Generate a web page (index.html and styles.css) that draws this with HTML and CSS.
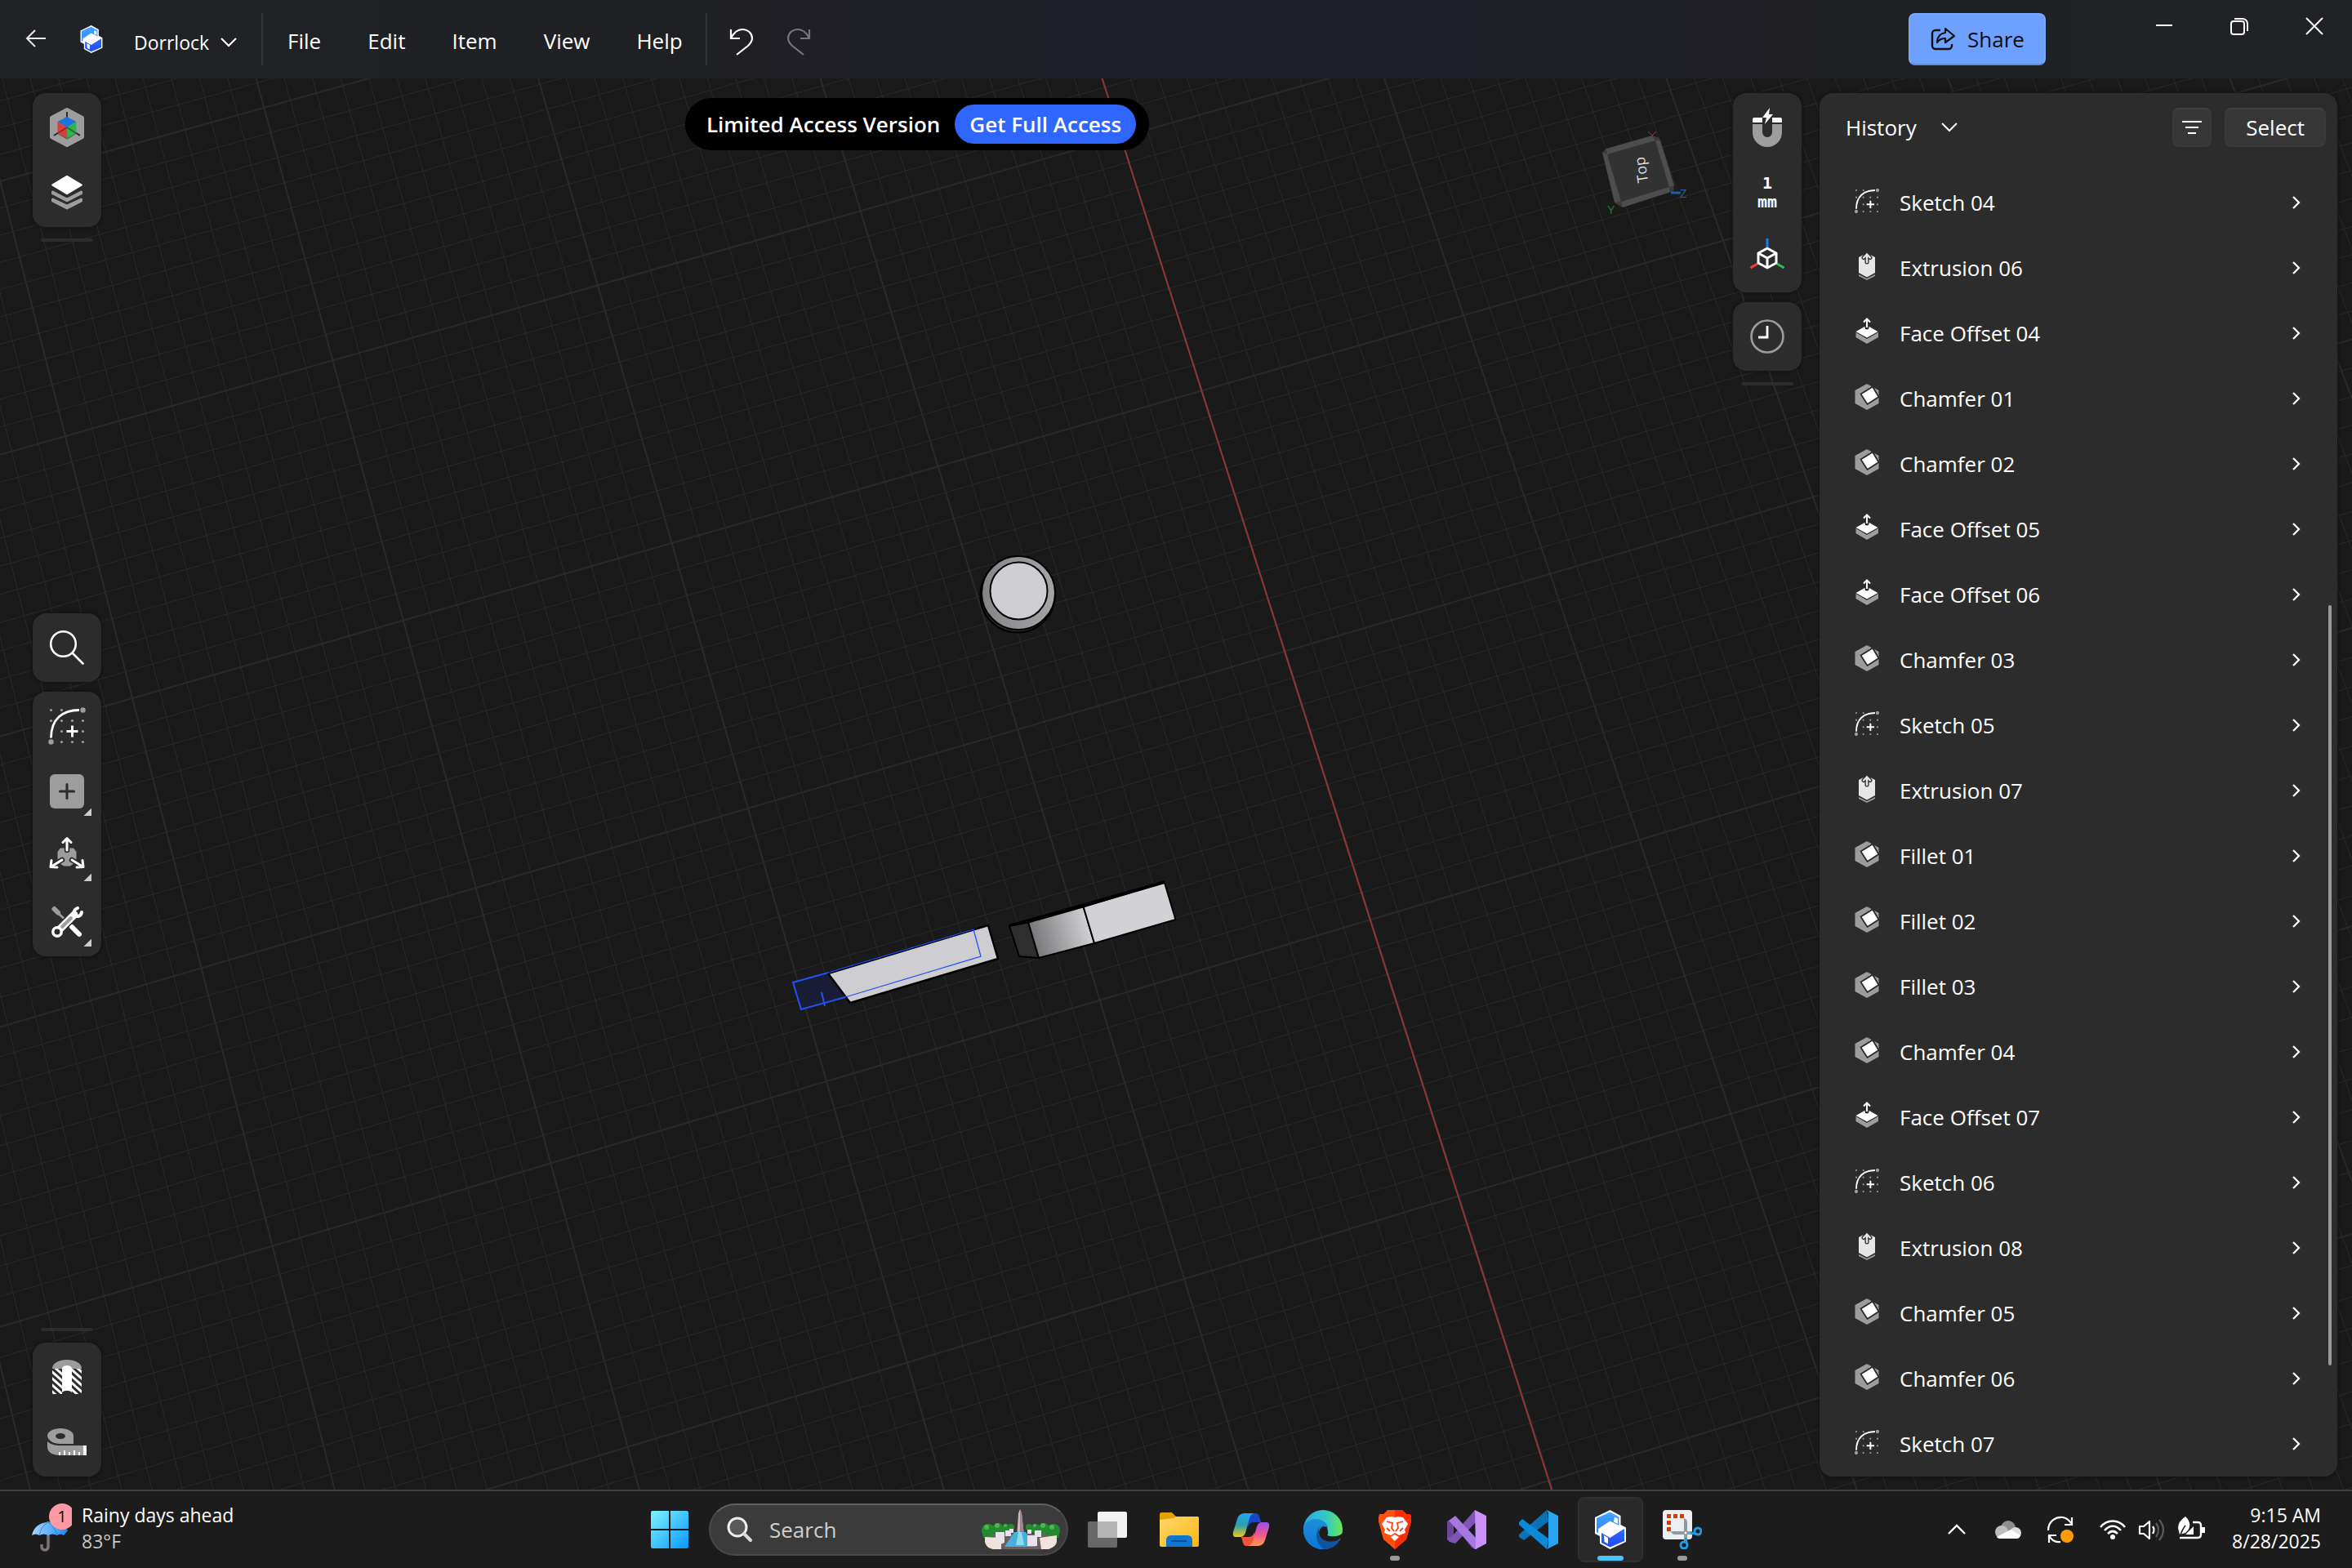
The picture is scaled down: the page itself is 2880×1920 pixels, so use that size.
FILE: index.html
```html
<!DOCTYPE html>
<html lang="en">
<head>
<meta charset="utf-8">
<meta name="viewport" content="width=device-width, initial-scale=1">
<title>Dorrlock</title>
<link rel="stylesheet" href="styles.css">
</head>
<body>
<svg class="defs" aria-hidden="true">
  <defs>
    <linearGradient id="logoTop" x1="0" y1="0" x2="0" y2="1"><stop offset="0" stop-color="#43a5ff"/><stop offset="1" stop-color="#2f86ff"/></linearGradient>
    <linearGradient id="logoLow" x1="0" y1="0" x2="0" y2="1"><stop offset="0" stop-color="#2f6bff"/><stop offset="1" stop-color="#1c49f5"/></linearGradient>
    <pattern id="hatch" width="6" height="6" patternUnits="userSpaceOnUse" patternTransform="rotate(42)"><rect width="6" height="3" fill="#fff"/></pattern>
  </defs>
  <symbol id="logo" viewBox="0 0 38 48">
    <path d="M18.500 0 31.500 7v11L38 21.500V39L18.500 48 6 41V32L0 29V9Z" fill="#fff"/>
    <path d="M18.500 2.500 29.500 8.500V19L18.500 13.500 4 23v5L2 27V10Z" fill="url(#logoTop)"/>
    <path d="M36 23v15L18.500 45.500 8 40V28l10.500 6L34 24Z" fill="url(#logoLow)"/>
    <path d="M18.500 15.500 33 24 18.500 32.500 5 24Z" fill="#fff"/>
    <path d="M24 8.500 28 10.500V17l-5-2.500Z" fill="#fff"/>
    <path d="M11 31l5 3v7.500l-4.500-2.500Z" fill="#fff"/>
  </symbol>
  <symbol id="sketch" viewBox="-24 -24 48 48">
    <g fill="#9d9d9d">
      <circle cx="-19.500" cy="-19.500" r="1.600"/><circle cx="-6.500" cy="-19.500" r="1.600"/>
      <circle cx="-19.500" cy="-6.500" r="1.600"/><circle cx="-6.500" cy="-6.500" r="1.600"/><circle cx="6.500" cy="-6.500" r="1.600"/><circle cx="19.500" cy="-6.500" r="1.600"/>
      <circle cx="-6.500" cy="6.500" r="1.600"/><circle cx="19.500" cy="6.500" r="1.600"/>
      <circle cx="-6.500" cy="19.500" r="1.600"/><circle cx="6.500" cy="19.500" r="1.600"/><circle cx="19.500" cy="19.500" r="1.600"/>
      <circle cx="19.500" cy="-19.500" r="3.200"/><circle cx="-19.500" cy="19.500" r="3.200"/>
    </g>
    <path d="M-19.500 14.500C-19.500-8-6-19.500 15-19.500" fill="none" stroke="#fff" stroke-width="2.800"/>
    <path d="M-.500 6.500h14M6.500-.500v14" fill="none" stroke="#fff" stroke-width="3"/>
  </symbol>
  <symbol id="extrusion" viewBox="-24 -24 48 48">
    <path d="M-10 8 0 13 10 8v2L0 15-10 10Z" fill="#9d9d9d"/>
    <path d="M-10-13-5-15.500h10L10-13V6L0 11.500-10 6Z" fill="#e6e6e6"/>
    <path d="M0-7v-9M-4-12.500 0-16.500 4-12.500" fill="none" stroke="#2c2c2c" stroke-width="5" stroke-linecap="round"/>
    <path d="M0-7v-9.500M-4-12.500 0-16.500 4-12.500" fill="none" stroke="#e6e6e6" stroke-width="2.400" stroke-linecap="round"/>
  </symbol>
  <symbol id="offset" viewBox="-24 -24 48 48">
    <path d="M-13.500-1 0 7 14-1V5L0 13-13.500 5Z" fill="#9d9d9d"/>
    <path d="M0-9.500 13.500-2 0 5.500-13.500-2Z" fill="#fff"/>
    <path d="M0-7v-8" stroke="#2c2c2c" stroke-width="5" stroke-linecap="round"/>
    <path d="M0-7v-10M-4-13.500 0-17.500 4-13.500" fill="none" stroke="#fff" stroke-width="2"/>
  </symbol>
  <symbol id="chamfer" viewBox="-24 -24 48 48">
    <path d="M0-18 14.500-10V6L0 14-14.500 6V-10Z" fill="#9d9d9d"/>
    <path d="M-7.500-5.500 7-14.500 14.500-2 .500 7Z" fill="#fff" stroke="#2c2c2c" stroke-width="1.800" stroke-linejoin="round"/>
  </symbol>
  <symbol id="next" viewBox="0 0 12 20"><path d="M2 3 9 10 2 17" fill="none" stroke="#fff" stroke-width="2.200"/></symbol>
  <symbol id="down" viewBox="0 0 24 16"><path d="M3 3l9 9 9-9" fill="none" stroke="currentColor" stroke-width="2"/></symbol>
  <symbol id="more" viewBox="0 0 10 10"><path d="M10 0v10H0Z" fill="#cfcfcf"/></symbol>
</svg>

<header class="titlebar">
  <button class="icon-btn back" aria-label="Back"><svg width="28" height="28" viewBox="0 0 28 28"><path d="M26 13H3M13 3 3 13 13 23" fill="none" stroke="#e8e8e8" stroke-width="2"/></svg></button>
  <svg class="app-logo" width="28" height="34"><use href="#logo"/></svg>
  <button class="doc-name">Dorrlock <svg width="24" height="16"><use href="#down"/></svg></button>
  <nav class="menus" aria-label="Main menu">
    <button>File</button><button>Edit</button><button>Item</button><button>View</button><button>Help</button>
  </nav>
  <div class="undo-redo">
    <button class="icon-btn" aria-label="Undo"><svg width="32" height="36" viewBox="0 0 32 36"><path d="M3 3v11h11M3 14C7 6 12 3 17 3c7 0 12 5 12 11 0 4-2 6-5 9L10 34" fill="none" stroke="#fff" stroke-width="2.200"/></svg></button>
    <button class="icon-btn" aria-label="Redo" disabled><svg width="32" height="36" viewBox="0 0 32 36"><path d="M29 3v11H18M29 14C25 6 20 3 15 3 8 3 3 8 3 14c0 4 2 6 5 9l14 11" fill="none" stroke="#75767a" stroke-width="2.200"/></svg></button>
  </div>
  <button class="share"><svg width="32" height="32" viewBox="0 0 32 32"><path d="M13 5H7a4 4 0 0 0-4 4v15a4 4 0 0 0 4 4h16a4 4 0 0 0 4-4v-2" fill="none" stroke="#111" stroke-width="2.400"/><path d="M19 3 30 12 19 20v-5c-5 0-8 2-10 5 0-7 4-11 10-12Z" fill="none" stroke="#111" stroke-width="2.200" stroke-linejoin="round"/></svg>Share</button>
  <div class="window-controls">
    <button aria-label="Minimize"><svg width="24" height="24" viewBox="0 0 24 24"><path d="M2 11h20" stroke="#fff" stroke-width="2"/></svg></button>
    <button aria-label="Restore"><svg width="24" height="24" viewBox="0 0 24 24"><rect x="2" y="6" width="16" height="16" rx="3" fill="none" stroke="#fff" stroke-width="2"/><path d="M6 3h10a6 6 0 0 1 6 6v9" fill="none" stroke="#fff" stroke-width="2"/></svg></button>
    <button aria-label="Close"><svg width="24" height="24" viewBox="0 0 24 24"><path d="M2 2l20 20M22 2 2 22" stroke="#fff" stroke-width="2"/></svg></button>
  </div>
</header>

<main class="workspace">
  <svg class="scene" viewBox="0 96 2880 1728" preserveAspectRatio="xMidYMid slice" aria-label="Model viewport">
    <defs><linearGradient id="steel" gradientUnits="userSpaceOnUse" x1="1265" y1="1150" x2="1332" y2="1132"><stop offset="0" stop-color="#78787a"/><stop offset="1" stop-color="#d0d0d3"/></linearGradient>
    <linearGradient id="rim" x1="0" x2="1"><stop offset="0" stop-color="#858587"/><stop offset="1" stop-color="#a5a5a8"/></linearGradient></defs>
    <path id="gridMinor" class="grid-minor"/>
    <path id="gridMajor" class="grid-major"/>
    <path d="M1349.500 96 1900 1824" stroke="#8f3535" stroke-width="2"/>
    <g stroke="#000" stroke-width="2" stroke-linejoin="round">
      <circle cx="1246" cy="729" r="45.500" fill="#2a2a2a"/>
      <circle cx="1247" cy="726" r="45" fill="url(#rim)"/>
      <circle cx="1247.500" cy="723.500" r="35" fill="#ceced2"/>
      <path d="M971 1203 1014 1192 1041 1221 981 1236Z" fill="#181c35" stroke="none"/>
      <path d="M1014 1192 1210 1133 1222 1174 1041 1228Z" fill="#ceced2" stroke-width="2.500"/>
      <path d="M1236 1134 1259 1129 1272 1173 1248 1171Z" fill="#2e2e2f"/>
      <path d="M1259 1129 1326.500 1110 1340 1155 1272 1173Z" fill="url(#steel)"/>
      <path d="M1326.500 1110 1426 1081 1439.500 1126 1340 1155Z" fill="#d2d2d6"/>
      <path d="M1237 1133 1259 1127 1326 1108 1425 1080 1326 1110 1259 1129Z" fill="#000" stroke-width="3"/>
    </g>
    <g fill="none" stroke="#2350f5">
      <path d="M1014 1191 971 1203 981 1236 1035 1221M1006 1215 1010 1232" stroke-width="2"/>
      <path d="M1014 1191 1192 1138 1201 1171 1035 1221" stroke-width="1.300"/>
    </g>
  </svg>

  <div class="rail rail-left">
    <div class="stack">
      <div class="tools">
        <button aria-label="Orientation"><svg width="80" height="80" viewBox="-40 -40 80 80"><path d="M0-22 19-12V12L0 22-19 12V-12Z" fill="#9d9d9d" stroke="#9d9d9d" stroke-width="4" stroke-linejoin="round"/><path d="M0-19v8M-16 10l6-4M16 10l-6-4" stroke="#222" stroke-width="1.800"/><path d="M-11.500 8 0 15 11.500 8 0 2Z" fill="#666"/><path d="M0-13 11.500-7 0 0-11.500-7Z" fill="#1d72e0"/><path d="M-11.500-7 0 0v13L-11.500 7Z" fill="#e03b3b"/><path d="M11.500-7 0 0v13L11.500 7Z" fill="#2fb34a"/><path d="M-11 7 0 0 11 7" fill="none" stroke="#222" stroke-opacity=".500" stroke-width="1.500"/></svg></button>
        <button aria-label="Layers"><svg width="80" height="80" viewBox="-40 -40 80 80"><g fill="#9d9d9d" stroke="#9d9d9d" stroke-width="3" stroke-linejoin="round"><path d="M-17.500 8 0 16 17.500 8v2L0 19-17.500 10Z"/><path d="M-17.500-1 0 8 17.500-1v2L0 10-17.500 1Z"/></g><path d="M-18 3.500 0 13 18 3.500M-18-5.500 0 4.500 18-5.500" fill="none" stroke="#2c2c2c" stroke-width="2"/><path d="M0-20 17.500-9.500 0 1-17.500-9.500Z" fill="#fff" stroke="#fff" stroke-width="2.500" stroke-linejoin="round"/></svg></button>
      </div>
      <div class="handle"></div>
    </div>
    <div class="stack">
      <div class="tools">
        <button aria-label="Search"><svg width="80" height="80" viewBox="-40 -40 80 80" fill="none" stroke="#fff" stroke-width="2.600" stroke-linecap="round"><circle cx="-4.500" cy="-4.500" r="15.300"/><path d="M6.500 6.500 19.500 19.500"/></svg></button>
      </div>
      <div class="tools">
        <button aria-label="Sketch"><svg width="48" height="48"><use href="#sketch"/></svg></button>
        <button aria-label="Add"><svg width="80" height="80" viewBox="-40 -40 80 80"><rect x="-21" y="-21" width="42" height="42" rx="6" fill="#9d9d9d"/><path d="M-8.500 0h17M0-8.500v17" stroke="#2c2c2c" stroke-width="3" stroke-linecap="round"/><use href="#more" x="20.500" y="20.500" width="9.500" height="9.500"/></svg></button>
        <button aria-label="Transform"><svg width="80" height="80" viewBox="-40 -40 80 80"><path d="M-8-10h16l3 4V6L4 11h-8l-7-5V-6Z" fill="#9d9d9d" stroke="#9d9d9d" stroke-width="1" stroke-linejoin="round"/><g fill="none" stroke-linecap="round" stroke-linejoin="round"><path d="M0-8v-12M-6 4-17 10M6 4 17 10" stroke="#2c2c2c" stroke-width="6.500"/><path d="M0-8v-14M-5-17.500 0-22.500 5-17.500M-6 4-19 12M-19 4.500-20 12.500-12 13M6 4 19 12M19 4.500 20 12.500 12 13" stroke="#fff" stroke-width="3"/></g><use href="#more" x="20.500" y="20.500" width="9.500" height="9.500"/></svg></button>
        <button aria-label="Tools"><svg width="80" height="80" viewBox="-40 -40 80 80" stroke-linecap="round"><path d="M-15.500-16 -11-11.500" stroke="#9d9d9d" stroke-width="6"/><path d="M-10-10-4.500-5" stroke="#9d9d9d" stroke-width="3"/><path d="M6 6 15 15" stroke="#fff" stroke-width="6"/><path d="M-9 9 9-9" stroke="#2c2c2c" stroke-width="12"/><path d="M-9 9 9-9" stroke="#fff" stroke-width="9"/><path d="M-6 6 5-5" stroke="#9d9d9d" stroke-width="4"/><circle cx="-12" cy="12" r="5.200" fill="#2c2c2c" stroke="#fff" stroke-width="3.500"/><path d="M13-17C8-15 7-10 10-8S17-7 18-12" fill="none" stroke="#fff" stroke-width="4"/><use href="#more" x="20.500" y="20.500" width="9.500" height="9.500"/></svg></button>
      </div>
    </div>
    <div class="stack">
      <div class="handle"></div>
      <div class="tools">
        <button aria-label="Section view"><svg width="80" height="80" viewBox="-40 -40 80 80"><path d="M-18-10C-18-17-10-21 0-21S18-17 18-10Z" fill="#9d9d9d"/><rect x="-18" y="-10" width="12" height="31" fill="url(#hatch)"/><rect x="6" y="-10" width="12" height="31" fill="url(#hatch)"/><path d="M-6-11C-4-15 4-15 6-11V19C3 16-3 16-6 19Z" fill="#fff"/></svg></button>
        <button aria-label="Measure"><svg width="80" height="80" viewBox="-40 -40 80 80"><path d="M8-8C8-13 1-17-8-17S-24-13-24-8s7 10 16 10H8Z" fill="#9d9d9d"/><ellipse cx="-8" cy="-7.500" rx="6" ry="3.500" fill="#2c2c2c"/><path d="M-24-1C-20 3-14 4-8 4H20V16H-8C-18 16-24 12-24 6Z" fill="#9d9d9d"/><path d="M20 4h4v12h-4ZM-10 12h2v4h-2ZM-4 10h2v6h-2ZM2 12h2v4H2ZM8 10h2v6H8ZM14 12h2v4h-2Z" fill="#fff"/></svg></button>
      </div>
    </div>
  </div>

  <div class="stage">
    <div class="promo">
      <span>Limited Access Version</span>
      <button>Get Full Access</button>
    </div>
    <svg class="view-cube" width="120" height="120" viewBox="1952 152 120 120" aria-label="View cube">
      <path d="M1962 187 1967 182 2023 166 2031 169 2033 172 2050 227 2049 234 1987 254 1977 248Z" fill="#4d4d4d"/>
      <path d="M1962 187 1967 182 1968 189ZM2023 166 2031 169 2033 172 2027 172ZM2050 227 2049 234 2044 235 2044 229ZM1977 248 1987 254 1985 247Z" fill="#3a3a3a"/>
      <path d="M1968 189 2027 172 2044 229 1985 247Z" fill="#323232"/>
      <text x="2009" y="208" transform="rotate(-98 2009 208)" text-anchor="middle" dominant-baseline="central" class="cube-face">Top</text>
      <path d="M2046 236H2058" stroke="#1c5ea8" stroke-width="3"/>
      <text x="2057" y="242" class="cube-axis" fill="#1c5ea8">Z</text>
      <text x="1968" y="262" class="cube-axis" fill="#2c7a35">Y</text>
      <path d="M2018 161 2023 166 2028 161" fill="none" stroke="#a33" stroke-width="1"/>
    </svg>
  </div>

  <div class="rail rail-right">
    <div class="stack">
      <div class="tools">
        <button aria-label="Snapping"><svg width="80" height="80" viewBox="-40 -40 80 80"><path d="M-18-4H-6V6A6 6 0 0 0 6 6V-4H18V6A18 18 0 0 1-18 6Z" fill="#9d9d9d"/><path d="M-18-6v-4q0-2 2-2H-6v6ZM18-6v-4q0-2-2-2H6v6Z" fill="#fff"/><path d="M3-24-6-12H-1L-3-4 7-16H2Z" fill="#fff"/></svg></button>
        <button class="unit"><span>1</span><span>mm</span></button>
        <button aria-label="Axes"><svg width="80" height="80" viewBox="-40 -40 80 80" fill="none" stroke-width="3" stroke-linejoin="round"><path d="M0-24v11" stroke="#1d7bea"/><path d="M-20.500 12-12 7" stroke="#f0433a"/><path d="M20.500 12 12 7" stroke="#30c04a"/><path d="M0-12 11-6V6L0 12-11 6V-6ZM-11-6 0 0 11-6M0 0v12" stroke="#fff"/></svg></button>
      </div>
      <div class="tools">
        <button aria-label="History"><svg width="80" height="80" viewBox="-40 -40 80 80" fill="none"><circle r="19.500" stroke="#9d9d9d" stroke-width="2.600"/><path d="M0-13V1H-11" stroke="#fff" stroke-width="2.800"/></svg></button>
      </div>
      <div class="handle"></div>
    </div>
  </div>

  <aside class="panel">
    <div class="panel-head">
      <button class="panel-title">History <svg width="24" height="16"><use href="#down"/></svg></button>
      <button class="chip chip-icon" aria-label="Filter"><svg width="28" height="28" viewBox="0 0 28 28"><path d="M2 7h24M6 14h16M9 21h10" stroke="#fff" stroke-width="2.200"/></svg></button>
      <button class="chip">Select</button>
    </div>
    <ul class="history">
      <li><button><svg class="sketch"><use href="#sketch"/></svg><span>Sketch 04</span><svg class="go"><use href="#next"/></svg></button></li>
      <li><button><svg><use href="#extrusion"/></svg><span>Extrusion 06</span><svg class="go"><use href="#next"/></svg></button></li>
      <li><button><svg><use href="#offset"/></svg><span>Face Offset 04</span><svg class="go"><use href="#next"/></svg></button></li>
      <li><button><svg><use href="#chamfer"/></svg><span>Chamfer 01</span><svg class="go"><use href="#next"/></svg></button></li>
      <li><button><svg><use href="#chamfer"/></svg><span>Chamfer 02</span><svg class="go"><use href="#next"/></svg></button></li>
      <li><button><svg><use href="#offset"/></svg><span>Face Offset 05</span><svg class="go"><use href="#next"/></svg></button></li>
      <li><button><svg><use href="#offset"/></svg><span>Face Offset 06</span><svg class="go"><use href="#next"/></svg></button></li>
      <li><button><svg><use href="#chamfer"/></svg><span>Chamfer 03</span><svg class="go"><use href="#next"/></svg></button></li>
      <li><button><svg class="sketch"><use href="#sketch"/></svg><span>Sketch 05</span><svg class="go"><use href="#next"/></svg></button></li>
      <li><button><svg><use href="#extrusion"/></svg><span>Extrusion 07</span><svg class="go"><use href="#next"/></svg></button></li>
      <li><button><svg><use href="#chamfer"/></svg><span>Fillet 01</span><svg class="go"><use href="#next"/></svg></button></li>
      <li><button><svg><use href="#chamfer"/></svg><span>Fillet 02</span><svg class="go"><use href="#next"/></svg></button></li>
      <li><button><svg><use href="#chamfer"/></svg><span>Fillet 03</span><svg class="go"><use href="#next"/></svg></button></li>
      <li><button><svg><use href="#chamfer"/></svg><span>Chamfer 04</span><svg class="go"><use href="#next"/></svg></button></li>
      <li><button><svg><use href="#offset"/></svg><span>Face Offset 07</span><svg class="go"><use href="#next"/></svg></button></li>
      <li><button><svg class="sketch"><use href="#sketch"/></svg><span>Sketch 06</span><svg class="go"><use href="#next"/></svg></button></li>
      <li><button><svg><use href="#extrusion"/></svg><span>Extrusion 08</span><svg class="go"><use href="#next"/></svg></button></li>
      <li><button><svg><use href="#chamfer"/></svg><span>Chamfer 05</span><svg class="go"><use href="#next"/></svg></button></li>
      <li><button><svg><use href="#chamfer"/></svg><span>Chamfer 06</span><svg class="go"><use href="#next"/></svg></button></li>
      <li><button><svg class="sketch"><use href="#sketch"/></svg><span>Sketch 07</span><svg class="go"><use href="#next"/></svg></button></li>
    </ul>
    <div class="scroll-thumb"></div>
  </aside>
</main>

<footer class="taskbar">
  <button class="weather">
    <svg width="52" height="64" viewBox="0 0 52 64"><defs><linearGradient id="brolly" x1="0" x2="1"><stop offset="0" stop-color="#a9d3ff"/><stop offset=".500" stop-color="#5fb2f7"/><stop offset="1" stop-color="#1c86ee"/></linearGradient></defs><path d="M23 26v30q0 5-4 5t-4-5v-2" fill="none" stroke="#7b7474" stroke-width="3.500"/><path d="M3 43C5 33 13 27 23 27S44 31 47 37L42 43Q38 40 34 43 28 40 23 43 18 40 12 43 8 40 3 43Z" fill="url(#brolly)"/><path d="M12 43Q14 32 23 27 31 32 34 43" fill="none" stroke="#2f8be0" stroke-width="1"/><circle cx="40" cy="20" r="16" fill="#ff99a4"/><text x="40" y="27" text-anchor="middle" class="badge-text">1</text></svg>
    <span class="weather-text"><span>Rainy days ahead</span><span class="dim">83°F</span></span>
  </button>

  <div class="apps">
    <button class="app" aria-label="Start"><svg width="48" height="48" viewBox="0 0 48 48"><defs><linearGradient id="win" x1="0" y1="0" x2="1" y2="1"><stop offset="0" stop-color="#7df3ff"/><stop offset="1" stop-color="#0a97ff"/></linearGradient></defs><path d="M3 1H23V23H1V3Q1 1 3 1ZM25 1H45Q47 1 47 3V23H25ZM1 25H23V47H3Q1 47 1 45ZM25 25H47V45Q47 47 45 47H25Z" fill="url(#win)"/></svg></button>
    <div class="search">
      <svg width="32" height="32" viewBox="0 0 32 32"><circle cx="13" cy="13" r="11" fill="#5a5a5a" stroke="#eee" stroke-width="3"/><path d="M21 21 29 29" stroke="#d8dce2" stroke-width="4" stroke-linecap="round"/></svg>
      <input type="search" placeholder="Search" aria-label="Search">
      <svg width="96" height="50" viewBox="0 0 96 50">
        <path d="M4 30H92V40Q88 49 78 49H18Q8 49 4 40Z" fill="#6a5f60"/>
        <g fill="#258a2f"><circle cx="8" cy="26" r="8"/><circle cx="88" cy="26" r="8"/><circle cx="20" cy="24" r="7"/><circle cx="76" cy="24" r="7"/><circle cx="30" cy="24" r="6"/><circle cx="66" cy="24" r="6"/><circle cx="36" cy="22" r="4"/><circle cx="58" cy="22" r="4"/><path d="M0 26h14v9H2ZM82 26h14l-2 9H82Z"/></g>
        <g fill="#48b84c"><circle cx="6" cy="22" r="3"/><circle cx="19" cy="20" r="3"/><circle cx="29" cy="20" r="2"/><circle cx="65" cy="20" r="2"/><circle cx="75" cy="20" r="3"/><circle cx="86" cy="22" r="3"/></g>
        <path d="M40 28H54L66 46H28Z" fill="#46b0dd"/><path d="M45 28h4l3 16H42Z" fill="#8fdbe6"/>
        <path d="M43.500 28 45 5 47 0 49 5 51.500 28Z" fill="#cdb9bb"/><path d="M47 0 49 5 51.500 28H47Z" fill="#9b8490"/>
        <g fill="#e6e3ee"><path d="M4 34 24 35V49H14Q5 47 4 40ZM92 32 71 35 73 49H82Q91 46 92 40Z" fill="#f0e2dc"/><path d="M17 28h11v13l-5 2V35h-6ZM29 26h7v7h-7ZM34 24h5v5h-5ZM56 25h5v5h-5ZM65 26h8v8h-8ZM56 32h12v13H56Z"/></g>
      </svg>
    </div>
    <button class="app" aria-label="Task view"><svg width="48" height="48" viewBox="0 0 48 48"><rect x="12" y="2" width="36" height="32" rx="2" fill="#f2f2f2"/><rect x="0" y="14" width="36" height="32" rx="2" fill="#757575" fill-opacity=".850"/><path d="M12 14h24v20H12Z" fill="#b4b4b4"/></svg></button>
    <button class="app" aria-label="File Explorer"><svg width="48" height="48" viewBox="0 0 48 48"><defs><linearGradient id="fold" x1="0" y1="0" x2="1" y2="1"><stop offset="0" stop-color="#ffd869"/><stop offset="1" stop-color="#fbb615"/></linearGradient></defs><path d="M0 5q0-2 2-2H15l5 5H46q2 0 2 2V20H0Z" fill="#e3a008"/><path d="M0 12 17 10l3-2H46q2 0 2 2V43q0 2-2 2H2q-2 0-2-2Z" fill="url(#fold)"/><path d="M8 45V37q0-6 6-6H34q6 0 6 6v8Z" fill="#0f77cf"/><path d="M14 38H33" stroke="#0a4f9c" stroke-width="2"/></svg></button>
    <button class="app" aria-label="Copilot"><svg width="48" height="48" viewBox="0 0 48 48"><defs><linearGradient id="cpA" x1="0" y1="0" x2="0" y2="1"><stop offset="0" stop-color="#20a8f0"/><stop offset=".500" stop-color="#2c9fb0"/><stop offset="1" stop-color="#f5c813"/></linearGradient><linearGradient id="cpB" x1="0" y1="0" x2="0" y2="1"><stop offset="0" stop-color="#9c50f0"/><stop offset=".500" stop-color="#ec5590"/><stop offset="1" stop-color="#ff9a52"/></linearGradient></defs><path d="M14 4H30q3 0 4 4l2 7H27q-5 0-7 6Z" fill="#1547c8"/><path d="M34 44H18q-3 0-4-4L12 33h9q5 0 7-6Z" fill="#f0533a"/><path d="M16 4H28q-5 1-6 6L17 28q-2 5-6 5H5Q1 33 2 27L7 11Q9 4 16 4Z" fill="url(#cpA)"/><path d="M32 44H20q5-1 6-6L31 20q2-5 6-5h6q4 0 3 6L41 37q-2 7-9 7Z" fill="url(#cpB)"/></svg></button>
    <button class="app" aria-label="Edge"><svg width="48" height="48" viewBox="0 0 48 48"><defs><linearGradient id="edA" x1="0" x2="1"><stop offset="0" stop-color="#2aa7ee"/><stop offset=".600" stop-color="#33c9c4"/><stop offset="1" stop-color="#6be84c"/></linearGradient><linearGradient id="edB" x1="0" y1="0" x2="0" y2="1"><stop offset="0" stop-color="#1b8fd8"/><stop offset="1" stop-color="#0b76d8"/></linearGradient></defs><circle cx="24" cy="24" r="24" fill="url(#edA)"/><path d="M0 24C1 14 8 11 15 11c9 0 15 6 15 11-5-3-11-1-11 6 0 8 8 12 14 12 5 0 8-2 11-4C40 44 33 48 24 48 10 48 0 37 0 24Z" fill="url(#edB)"/><path d="M29 31C31 30 30 26 29 21L24 20c-3 2-5 4-5 8 0 8 8 12 14 12 5 0 8-2 12-5L48 33V28C44 33 34 33 29 31Z" fill="#1c1c1c"/><path d="M22 19C14 24 13 42 26 48 34 48 42 43 45 35 38 41 20 40 19 28Q18 22 22 19Z" fill="#12539f"/></svg></button>
    <button class="app running" aria-label="Brave"><svg width="48" height="48" viewBox="0 0 48 48"><path d="M15 0H33L38 5 43 5 44 9V14L38 36 24 48 10 36 4 14V9L5 5H10Z" fill="#ff5010"/><path d="M24 0H33L38 5 43 5 44 9V14L38 36 24 48Z" fill="#ff2c08"/><path d="M14 9 20 8 24 9 28 8 34 9 40 17 36 24 37 28 29 31 24 28 19 31 11 28 12 24 8 17Z" fill="#fff"/><path d="M24 30 29 33 24 38 19 33Z" fill="#fff"/><path d="M14 14 21 16 20 22 23 26M34 14 27 16 28 22 25 26M14 22 18 26M34 22 30 26" fill="none" stroke="#ff4310" stroke-width="1.800"/></svg></button>
    <button class="app" aria-label="Visual Studio"><svg width="48" height="48" viewBox="0 0 48 48"><path d="M0 14 5 11 30 32 34 48 30 46 8 18V32L3 39 0 36Z" fill="#6b48a0"/><path d="M34 0 36 14 10 41 3 39 0 35 7 31Z" fill="#7d56b5"/><path d="M2 13 10 7 36 35V48L34 48Z" fill="#a678e0"/><path d="M34 0 48 7V41L35 48Z" fill="#cb92fa"/></svg></button>
    <button class="app" aria-label="Visual Studio Code"><svg width="48" height="48" viewBox="0 0 48 48"><path d="M34 0 36 14 6 37 0 33V30Z" fill="#0a72b5"/><path d="M0 15 4 11 36 35 34 48 0 18Z" fill="#0b8ad8"/><path d="M34 0 48 7V41L34 48 36 44V4Z" fill="#27a5f2"/></svg></button>
    <button class="app running active" aria-label="Shapr3D"><svg width="38" height="48"><use href="#logo"/></svg></button>
    <button class="app running" aria-label="Snipping Tool"><svg width="48" height="48" viewBox="0 0 48 48"><rect width="36" height="36" rx="4" fill="#eceff2"/><path d="M5 5h5v5H5ZM13 5h5v5h-5ZM21 5h5v5h-5ZM5 13h5v5H5ZM5 21h5v5H5Z" fill="#d83b01"/><path d="M26 10q4 1 4 5V38h-4ZM10 26h26v4H15q-4 0-5-4Z" fill="#8f99a3"/><circle cx="28" cy="28" r="1.500" fill="#fff"/><circle cx="43" cy="26" r="4" fill="none" stroke="#1f9de0" stroke-width="3"/><circle cx="26" cy="43" r="4" fill="none" stroke="#1f9de0" stroke-width="3"/><path d="M34 28 40 29M28 34 29 40" stroke="#1f9de0" stroke-width="3"/></svg></button>
  </div>

  <div class="tray">
    <svg width="24" height="32" viewBox="0 0 24 32"><path d="M2 21 12 11 22 21" fill="none" stroke="#fff" stroke-width="2.400"/></svg>
    <svg class="cloud" width="34" height="32" viewBox="0 0 34 32"><circle cx="17" cy="14" r="9" fill="#8e8e8e"/><circle cx="9" cy="19" r="8" fill="#bdbdbd"/><circle cx="26" cy="20" r="7" fill="#dedede"/><path d="M3 25 20 16 32 23Q31 27 27 27H8Q4 27 3 25Z" fill="#fff"/></svg>
    <svg class="sync" width="34" height="34" viewBox="0 0 34 34" fill="none" stroke="#fff" stroke-width="2.200"><path d="M2 18C2 6 12 1 20 2 26 3 29 7 31 11M31 2v9H22"/><path d="M3 33V24h9M3 24C6 30 11 33 17 32"/><circle cx="25" cy="25" r="8" fill="#ff9a0c" stroke="none"/></svg>
    <svg width="34" height="32" viewBox="0 0 34 32" fill="none" stroke="#fff" stroke-width="2.600"><path d="M2 13C10 3 24 3 32 13M7 17C13 10 21 10 27 17M11 21C15 17 19 17 23 21"/><circle cx="17" cy="25" r="3" fill="#fff" stroke="none"/></svg>
    <svg width="34" height="32" viewBox="0 0 34 32" fill="none" stroke="#fff" stroke-width="2.200"><path d="M2 12H7L14 6V27L7 21H2Z" stroke-linejoin="round"/><path d="M18 12Q21 16 18 21"/><path d="M22 8Q28 16 22 25M26 4Q36 16 26 29" stroke="#5a5a5a"/></svg>
    <svg width="34" height="32" viewBox="0 0 34 32"><path d="M19 7H25q4 0 4 4v11q0 4-4 4H3" fill="none" stroke="#fff" stroke-width="2.400"/><path d="M30 13h4v7h-4ZM10 22 20 12V22Z" fill="#fff"/><path d="M10 0C16 5 18 14 10 20L3 22 1 14Q1 6 10 0Z" fill="#fff"/><path d="M3 25Q6 16 10 11" stroke="#1c1c1c" stroke-width="1.500" fill="none"/></svg>
    <div class="clock"><span>9:15 AM</span><span>8/28/2025</span></div>
  </div>
</footer>
<script src="grid.js"></script>
</body>
</html>
```
FILE: styles.css
```css
* { box-sizing: border-box; }
body {
  margin: 0;
  min-height: 100vh;
  display: flex;
  flex-direction: column;
  background: #1a1a1a;
  color: #fff;
  font-family: "Open Sans", "Noto Sans", sans-serif;
  font-size: 26px;
  line-height: 32px;
}
button {
  margin: 0;
  padding: 0;
  border: 0;
  background: none;
  color: inherit;
  font: inherit;
  display: flex;
  align-items: center;
  justify-content: center;
}
svg { display: block; flex: none; }
.defs { position: absolute; width: 0; height: 0; }

/* Title bar */
.titlebar {
  display: flex;
  align-items: center;
  height: 96px;
  padding-left: 16px;
  background: linear-gradient(90deg, #202225 0%, #1f2024 30%, #1f1f29 45%, #1f1f29 62%, #1f2024 78%, #202225 100%);
}
.icon-btn { width: 56px; height: 64px; }
.app-logo { margin-left: 26px; }
.doc-name {
  gap: 12px;
  margin-left: 38px;
  padding-top: 8px;
  font-size: 23px;
}
.menus {
  display: flex;
  align-items: center;
  gap: 57px;
  height: 64px;
  margin-left: 28px;
  padding: 4px 28px 0 30px;
  border-left: 2px solid #34363a;
  border-right: 2px solid #34363a;
}
.undo-redo {
  display: flex;
  gap: 14px;
  padding: 6px 0 0 14px;
}
.share {
  gap: 14px;
  width: 168px;
  height: 64px;
  margin-left: auto;
  border: 2px solid #7aa8ff;
  border-bottom-color: #5e8fdb;
  border-radius: 8px;
  background: #6ea0ff;
  color: #0c0c10;
}
.window-controls {
  display: flex;
  align-self: flex-start;
  margin-left: 99px;
}
.window-controls button { width: 92px; height: 64px; }

/* Workspace */
.workspace {
  position: relative;
  flex: 1;
  display: flex;
  padding: 18px 18px 16px 40px;
  background: #1a1a1a;
}
.scene {
  position: absolute;
  inset: 0;
  width: 100%;
  height: 100%;
}
.grid-minor, .grid-major { fill: none; stroke: #2a2a2a; }
.grid-minor { stroke-width: 1px; }
.grid-major { stroke-width: 2px; }

.rail {
  position: relative;
  flex: none;
  display: flex;
  flex-direction: column;
  justify-content: space-between;
  width: 84px;
}
.rail-right { margin-right: 22px; }
.stack { display: flex; flex-direction: column; gap: 12px; }
.tools {
  padding: 2px;
  border-radius: 16px;
  background: #2c2c2c;
  box-shadow: 0 0 4px #0e0e0e;
}
.tools button { width: 80px; height: 80px; }
.tools .unit {
  flex-direction: column;
  font: bold 20px/23px "DejaVu Sans Mono", monospace;
}
.handle {
  width: 64px;
  height: 4px;
  margin: 2px 10px;
  border-radius: 2px;
  background: #2c2c2c;
}
.stack .handle:first-child { margin-top: 0; }
.stack .handle:last-child { margin-bottom: 0; }

.stage { position: relative; flex: 1; }
.promo {
  display: flex;
  align-items: center;
  gap: 18px;
  width: max-content;
  height: 64px;
  margin: 6px auto 0;
  padding: 0 16px 0 26px;
  border-radius: 32px;
  background: #000;
  font-weight: 600;
}
.promo button {
  height: 48px;
  padding: 0 18px;
  border-radius: 24px;
  background: #2f66ff;
}
.view-cube {
  position: absolute;
  top: 38px;
  right: 50px;
}
.cube-face { fill: #ddd; font: 18px "Open Sans", sans-serif; }
.cube-axis { font: 14px "Liberation Sans", sans-serif; }

/* History panel */
.panel {
  position: relative;
  flex: none;
  width: 634px;
  border-radius: 16px;
  background: #2c2c2c;
  box-shadow: 0 0 4px #0e0e0e;
}
.panel-head {
  display: flex;
  align-items: center;
  gap: 16px;
  height: 94px;
  padding: 0 14px 10px 32px;
}
.panel-title { gap: 28px; margin-right: auto; }
.chip {
  height: 48px;
  padding: 0 24px;
  border: 2px solid #3a3a3a;
  border-top-color: #414141;
  border-radius: 8px;
  background: #373737;
}
.chip-icon { width: 48px; padding: 0; }
.history { margin: 0; padding: 0; list-style: none; }
.history button {
  width: 100%;
  height: 80px;
  padding: 0 44px 0 34px;
  justify-content: flex-start;
}
.history svg { width: 48px; height: 48px; }
.history svg.sketch { width: 32px; height: 32px; margin: 0 8px 4px; }
.history svg.go { width: 12px; height: 20px; margin-left: auto; }
.history span { margin-left: 16px; }
.scroll-thumb {
  position: absolute;
  top: 37%;
  right: 7px;
  width: 4px;
  height: 55%;
  border-radius: 2px;
  background: #9a9a9a;
}

/* Taskbar */
.taskbar {
  display: grid;
  grid-template-columns: 1fr auto 1fr;
  align-items: center;
  height: 96px;
  border-top: 2px solid #414141;
  background: #1c1c1c;
  font-size: 23px;
}
.weather { justify-self: start; gap: 12px; padding-left: 36px; }
.weather svg { margin-top: -8px; }
.weather-text { display: flex; flex-direction: column; text-align: left; margin-top: -4px; }
.dim { color: #c8c8c8; }
.badge-text { font-size: 20px; }
.apps { display: flex; align-items: center; gap: 8px; }
.app {
  position: relative;
  width: 80px;
  height: 80px;
  border: 2px solid transparent;
  border-radius: 8px;
}
.active { background: #292929; border-color: #303030; }
.running::after {
  content: "";
  position: absolute;
  bottom: 0;
  left: 50%;
  width: 12px;
  height: 6px;
  margin-left: -6px;
  border-radius: 3px;
  background: #9a9a9a;
}
.active::after { width: 32px; margin-left: -16px; background: #4cc2ff; }
.search {
  display: flex;
  align-items: center;
  width: 440px;
  height: 64px;
  padding: 0 8px 0 20px;
  border: 2px solid #484848;
  border-top-color: #606060;
  border-radius: 32px;
  background: #3b3b3b;
}
.search input {
  flex: 1;
  min-width: 0;
  margin-left: 20px;
  padding: 0;
  border: 0;
  outline: 0;
  background: none;
  color: #fff;
  font: 26px/32px "Open Sans", sans-serif;
}
.search input::placeholder { color: #cfcfcf; opacity: 1; }
.tray {
  justify-self: end;
  display: flex;
  align-items: center;
  gap: 14px;
  padding-right: 38px;
}
.tray .cloud { margin-left: 20px; }
.tray .sync { margin: 0 16px; }
.clock {
  display: flex;
  flex-direction: column;
  width: 128px;
  margin-top: -4px;
  text-align: right;
}
```
FILE: grid.js
```js
// Ground plane seen in perspective: u and v count major cells, ten minor cells each.
function project(u, v) {
  const w = 1 + 0.0043 * u - 0.0142 * v;
  return [(329.1 * u + 79.8 * v + 80) / w, (-90.8 * u + 308.9 * v + 534) / w];
}

function segment(a, b) {
  return `M${a[0].toFixed(1)} ${a[1].toFixed(1)}L${b[0].toFixed(1)} ${b[1].toFixed(1)}`;
}

const min = -6;
const max = 12;
let minor = "";
let major = "";
for (let n = min * 10; n <= max * 10; n++) {
  const t = n / 10;
  const lines = segment(project(t, min), project(t, max)) + segment(project(min, t), project(max, t));
  if (n % 10 === 0) major += lines;
  else minor += lines;
}
document.getElementById("gridMinor").setAttribute("d", minor);
document.getElementById("gridMajor").setAttribute("d", major);
```
